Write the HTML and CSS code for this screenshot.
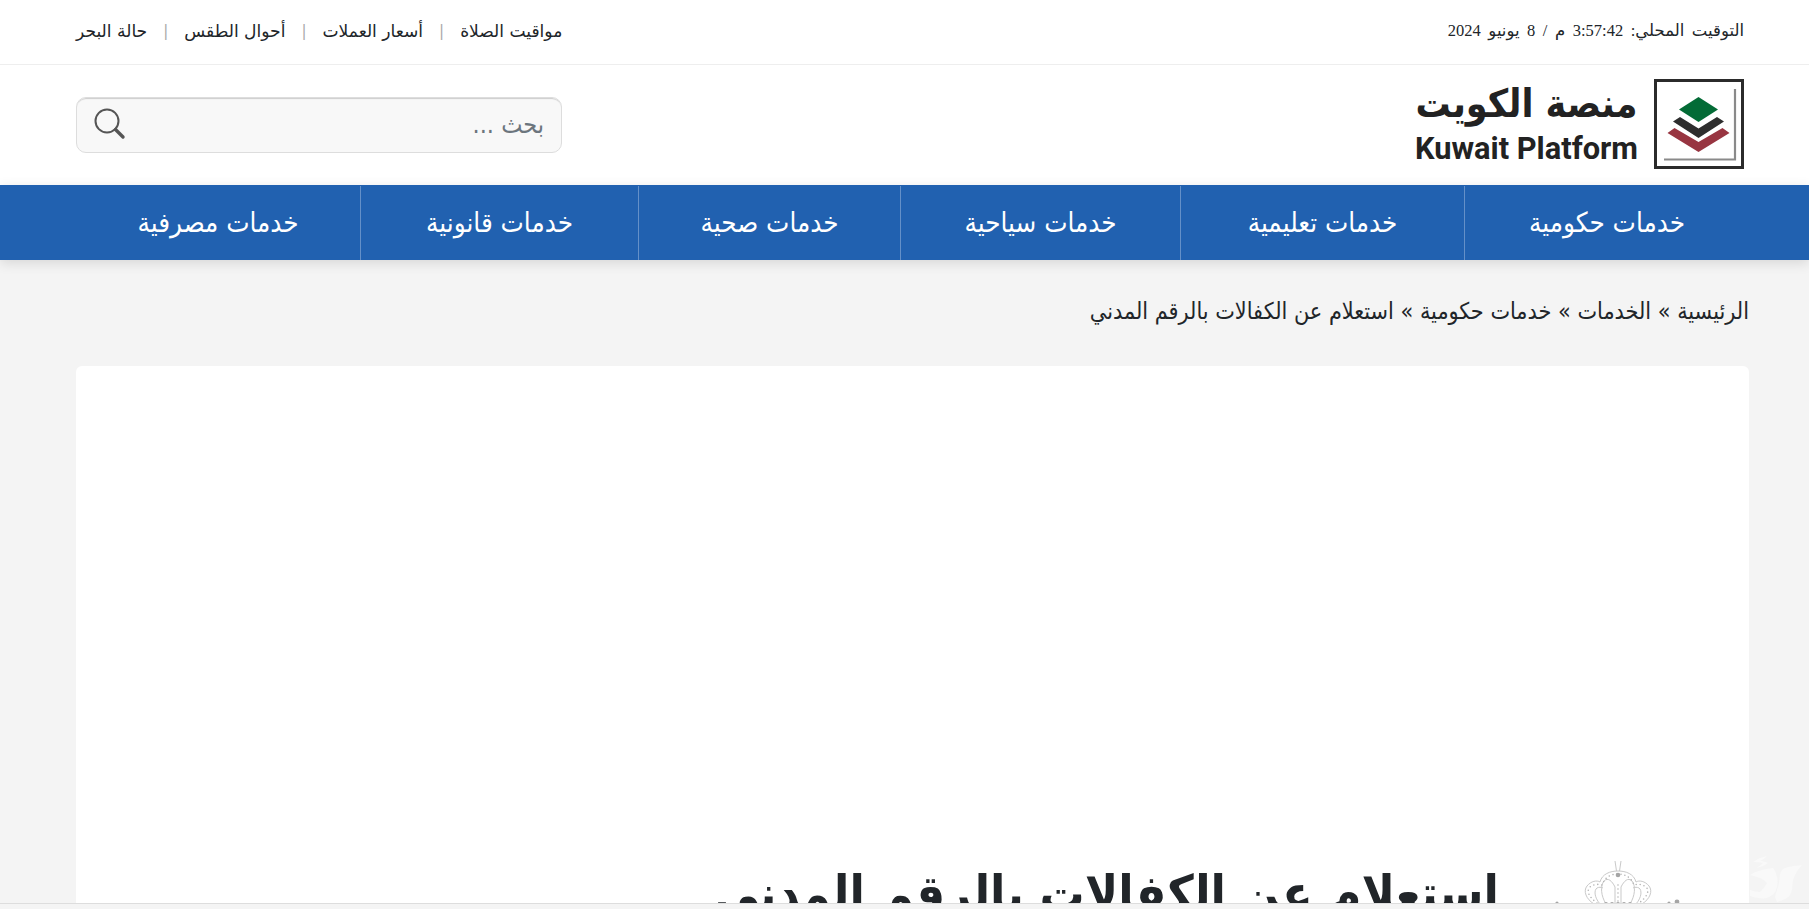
FILE: index.html
```html
<!DOCTYPE html>
<html lang="ar" dir="rtl">
<head>
<meta charset="utf-8">
<title>استعلام عن الكفالات بالرقم المدني</title>
<link rel="stylesheet" href="styles.css">
</head>
<body>
<div class="page">
  <div class="topbar">
    <div class="clock">التوقيت المحلي: 3:57:42 م / 8 يونيو 2024</div>
    <ul class="toplinks">
      <li>مواقيت الصلاة</li>
      <li class="sep">|</li>
      <li>أسعار العملات</li>
      <li class="sep">|</li>
      <li>أحوال الطقس</li>
      <li class="sep">|</li>
      <li>حالة البحر</li>
    </ul>
  </div>
  <header class="masthead">
    <div class="logo">
      <svg class="logo-mark" width="90" height="90" viewBox="0 0 90 90">
        <rect x="1.500" y="1.500" width="87" height="87" fill="#fff" stroke="#2b2b2b" stroke-width="3"/>
        <path d="M10 80.500H81V10" fill="none" stroke="#8a8a8a" stroke-width="2.200"/>
        <path d="M44.500 18 64 30.500 44.500 43 25 30.500Z" fill="#036b36"/>
        <path d="M44.500 49.500 26 38 19 42.500 44.500 59 70 42.500 63 38Z" fill="#2e2e2e"/>
        <path d="M44.500 63 20.500 49 13.500 54 44.500 73 75.500 54 68.500 49Z" fill="#983541"/>
      </svg>
      <div class="logo-text">
        <div class="logo-ar">منصة الكويت</div>
        <div class="logo-en" dir="ltr">Kuwait Platform</div>
      </div>
    </div>
    <form class="search">
      <span class="search-input">بحث ...</span>
      <svg class="search-icon" width="32" height="32" viewBox="0 0 32 32">
        <circle cx="13" cy="13" r="11.500" fill="none" stroke="#555" stroke-width="2"/>
        <path d="M21.500 21.500 29 29" stroke="#555" stroke-width="3.400" stroke-linecap="round"/>
      </svg>
    </form>
  </header>
  <nav class="mainnav">
    <a>خدمات حكومية</a>
    <a>خدمات تعليمية</a>
    <a>خدمات سياحية</a>
    <a>خدمات صحية</a>
    <a>خدمات قانونية</a>
    <a>خدمات مصرفية</a>
  </nav>
  <main class="content">
    <div class="crumbs">الرئيسية » الخدمات » خدمات حكومية » استعلام عن الكفالات بالرقم المدني</div>
    <section class="card">
      <div class="card-head">
        <svg class="crown" width="140" height="50" viewBox="0 0 140 50">
          <g fill="none" stroke="#c9c9c9" stroke-width="1">
            <path d="M67 1 68.500 11M73 1 71.500 11"/>
            <path d="M46 44C38 39 35 31 39 26 43 21 49 20 52 22 54 14 62 11 70 11 78 11 86 14 88 22 91 20 97 21 101 26 105 31 102 39 94 44"/>
            <path d="M52 44C46 37 46 30 49 28 51 27 53 27 55 28M88 44C94 37 94 30 91 28 89 27 87 27 85 28"/>
            <path d="M58 44C53 36 52 26 56 21 60 17 64 21 67 27V44M82 44C87 36 88 26 84 21 80 17 76 21 73 27V44"/>
          </g>
          <g fill="none" stroke="#b5b5b5" stroke-width="1.600" stroke-linecap="round" stroke-dasharray="0 4">
            <path d="M49 43C41 37 38 31 42 27 46 24 50 24 54 25 57 17 63 14 70 14 77 14 83 17 86 25 90 24 94 24 98 27 102 31 99 37 91 43"/>
            <path d="M70 25V45"/>
          </g>
          <circle cx="70" cy="15" r="2.300" fill="#a5a5a5"/>
          <g fill="#a5a5a5"><circle cx="58" cy="44" r="2"/><circle cx="64" cy="44" r="2"/><circle cx="70" cy="44" r="2"/><circle cx="76" cy="44" r="2"/><circle cx="82" cy="44" r="2"/><circle cx="9" cy="43" r="1.600"/><circle cx="121" cy="43" r="1.600"/><circle cx="129" cy="42" r="2.400"/></g>
        </svg>
        <h1 class="title">استعلام عن الكفالات بالرقم المدني</h1>
      </div>
    </section>
  </main>
  <svg class="brush" width="60" height="64" viewBox="0 0 60 64">
    <path d="M53 25C44 26 36 27 33 30 30 34 31 38 30 43 29 48 27 52 26 57L28 62C35 60 39 58 41 55 44 50 43 45 44 40 46 34 49 29 53 25Z"/>
    <path d="M24 28C16 29 7 31 1 35 5 36 8 37 11 38 14 39 16 41 18 43 16 47 13 50 11 52 8 52 4 51 1 50V56C7 58 13 59 18 58 23 56 26 53 27 50 29 45 29 41 28 37 27 33 26 30 24 28Z"/>
    <path d="M18 16C13 17 8 19 4 22 7 22 11 22 14 23 12 25 10 26 8 28 12 27 16 25 19 23 17 22 14 21 11 21 13 20 16 18 18 16Z"/>
  </svg>
  <div class="screen-edge"></div>
</div>
</body>
</html>
```
FILE: styles.css
```css
* { box-sizing: border-box; }
html, body { margin: 0; height: 100%; overflow: hidden; }
body { background: #f4f4f4; color: #212529; font-family: "DejaVu Sans Condensed", "DejaVu Sans", sans-serif; }
.page { height: 909px; overflow: hidden; position: relative; display: flex; flex-direction: column; }
.topbar { height: 65px; flex: none; background: #fff; border-bottom: 1px solid #eee; padding: 0 65px 2px 76px; display: flex; justify-content: space-between; align-items: center; }
.clock { font-family: "Liberation Serif", "DejaVu Sans", serif; font-size: 16.500px; word-spacing: 3.400px; }
.toplinks { list-style: none; margin: 0; padding: 0; display: flex; gap: 16px; font-size: 17.100px; font-family: "DejaVu Sans", sans-serif; }
.sep { color: #aaa; font-size: 15px; line-height: 21px; }
.masthead { height: 120px; flex: none; background: #fff; padding: 14px 65px 0 76px; display: flex; justify-content: space-between; align-items: flex-start; }
.logo { display: flex; gap: 15px; }
.logo-text { display: flex; flex-direction: column; color: #222; width: 225px; }
.logo-ar { font-size: 39px; font-weight: 700; line-height: 50px; text-align: center; white-space: nowrap; }
.logo-en { font-family: Roboto, sans-serif; font-size: 30.800px; font-weight: 700; line-height: 38px; margin-top: 1px; text-align: center; white-space: nowrap; }
.search { width: 486px; height: 56px; margin-top: 18px; background: #f8f8f8; border: 1px solid #ddd; border-radius: 10px; box-shadow: inset 0 2px 1px -1px #ccc; display: flex; justify-content: space-between; align-items: center; padding: 0 17px 2px; }
.search-input { font-size: 25px; color: #6c757d; }
.search-icon { display: block; }
.mainnav { height: 75px; flex: none; background: #2161b0; box-shadow: 0 3px 12px rgba(0,0,0,.12); display: grid; grid-template-columns: 285px 284px 280px 262px 278px 1fr; padding: 0 60px 0 76px; }
.mainnav a { color: #fff; font-size: 27.500px; display: flex; align-items: center; justify-content: center; padding-bottom: 2px; border-left: 1px solid rgba(255,255,255,.3); margin-top: 1px; white-space: nowrap; }
.mainnav a:last-child { border-left: 0; }
.content { flex: 1; padding: 0 60px; }
.crumbs { font-size: 23.200px; margin: 36px 0 41px; line-height: 29px; }
.card { background: #fff; border-radius: 6px; height: 600px; margin-left: 16px; padding-top: 494px; }
.card-head { display: flex; gap: 49px; align-items: flex-start; padding-right: 61px; }
.title { margin: 4px 0 0; font-size: 50px; font-weight: 700; line-height: 60px; }
.brush { position: absolute; left: 1749px; top: 840px; fill: #f9f9f9; }
.screen-edge { position: absolute; left: 0; right: 0; bottom: 0; height: 6px; background: #f4f4f4; border-top: 1px solid #ddd; }
```
